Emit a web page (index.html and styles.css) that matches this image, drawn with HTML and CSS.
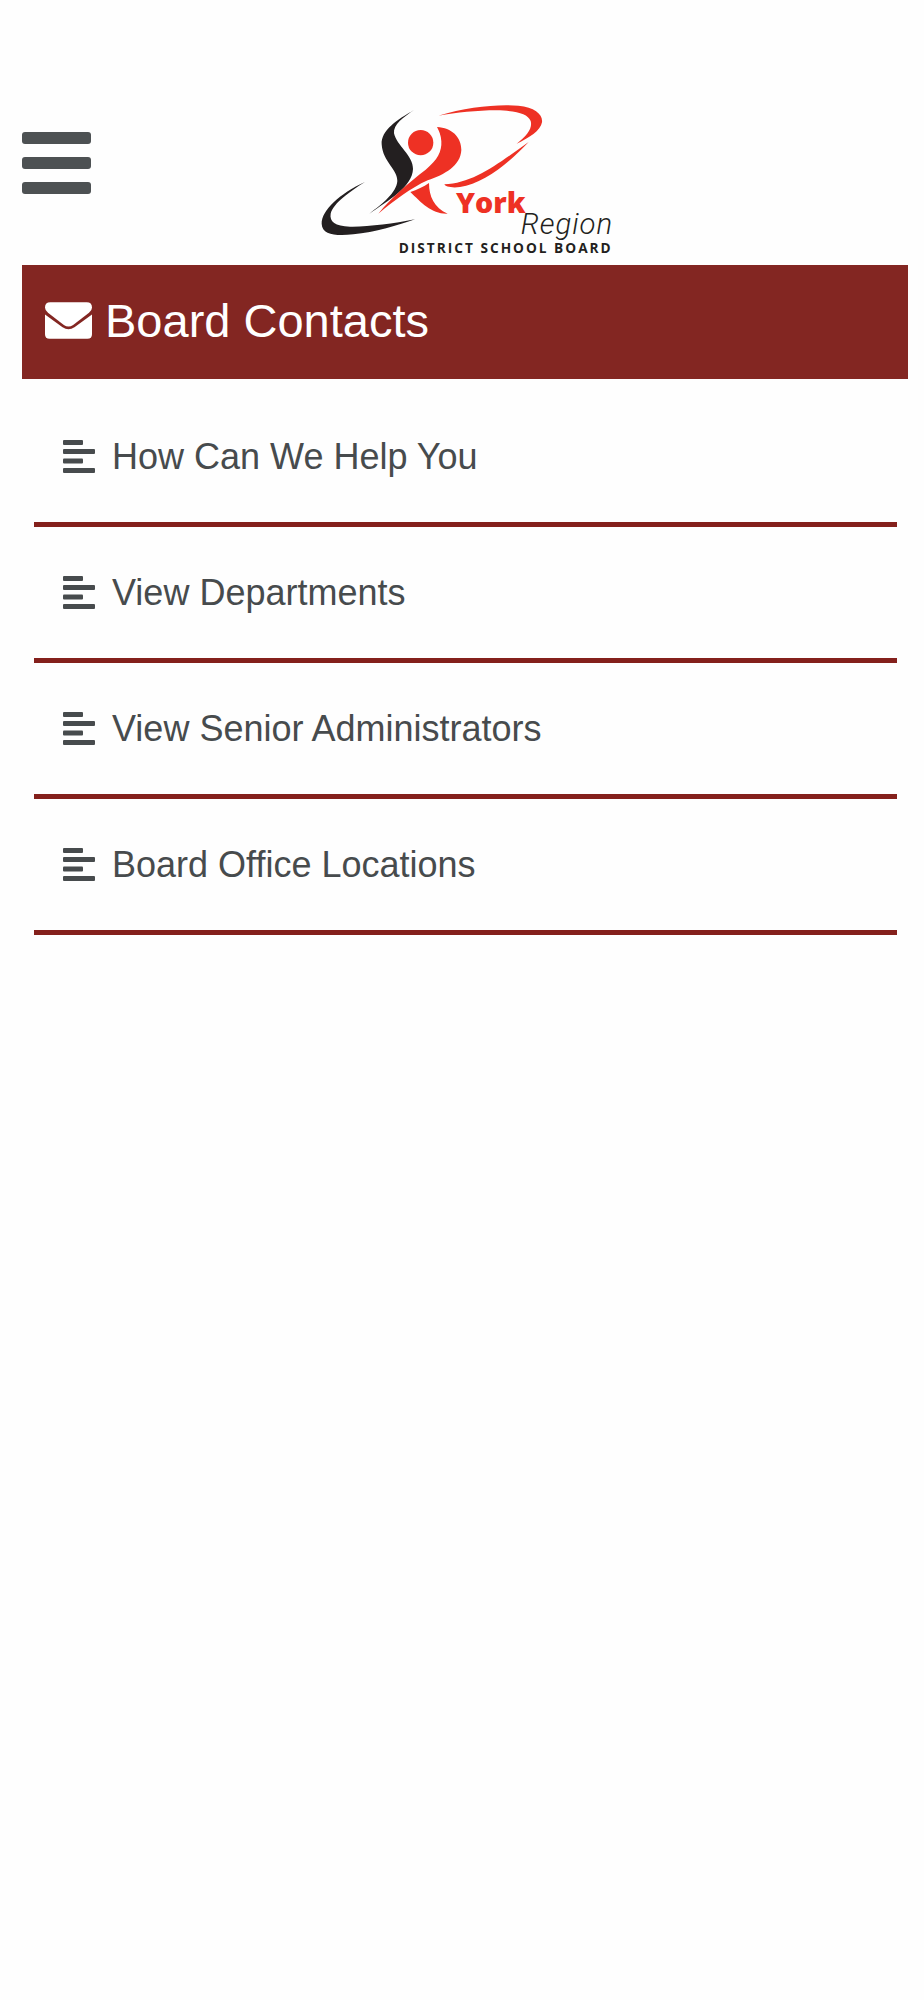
FILE: index.html
```html
<!DOCTYPE html>
<html lang="en">
<head>
<meta charset="utf-8">
<meta name="viewport" content="width=device-width, initial-scale=1">
<title>Board Contacts</title>
<link rel="stylesheet" href="styles.css">
</head>

<body>

<svg class="defs" aria-hidden="true">
	<symbol id="lines" viewBox="0 0 32 33">
		<rect x="0" y="0" width="20" height="5" rx="1"/>
		<rect x="0" y="9" width="32" height="5" rx="1"/>
		<rect x="0" y="18.500" width="20" height="5" rx="1"/>
		<rect x="0" y="28" width="32" height="5" rx="1"/>
	</symbol>
</svg>

<header class="header">
	<button class="menu" type="button" aria-label="Menu">
		<span></span>
		<span></span>
		<span></span>
	</button>
	<!-- logo -->
	<svg class="logo" viewBox="0 0 930 510" role="img" aria-label="York Region District School Board">
		<g class="black">
			<path d="M313 44C262 74 213 105 215 148C218 200 264 225 262 258C260 292 218 326 178 356C236 316 307 275 309 222C310 182 260 152 252 115C249 88 280 67 313 44Z"/>
			<path d="M165 261C88 296 35 346 35 386C36 420 80 424 130 418C195 413 265 390 315 373C248 386 175 396 120 395C75 393 58 380 62 356C70 325 120 289 165 261Z"/>
		</g>
		<g class="red">
			<circle cx="332" cy="143" r="38"/>
			<path d="M381 96C425 98 454 126 454 165C452 212 404 239 353 256C302 279 252 318 205 356C243 308 298 262 347 224C382 196 396 169 394 139C393 121 387 107 381 96Z"/>
			<path d="M301 291C321 285 341 275 357 264C357 304 372 338 413 356C366 358 334 323 301 291Z"/>
			<path d="M385 62C470 36 560 27 625 32C675 37 699 58 696 82C692 107 657 129 620 146C652 121 668 100 662 78C653 56 620 48 560 46C500 46 440 53 385 62Z"/>
			<path d="M656 141C598 203 520 267 450 276C425 280 405 274 403 268C492 265 568 203 656 141Z"/>
		</g>
		<text class="york" x="438" y="355">York</text>
		<text class="region" x="632" y="418">Region</text>
		<text class="board" x="266" y="475">DISTRICT SCHOOL BOARD</text>
	</svg>
</header>

<main>
	<h1 class="title">
		<svg class="mail" viewBox="0 0 142 111" aria-hidden="true">
			<path d="M16 0H126Q142 0 142 16Q142 25 133 32L85 69Q71 79 57 69L9 32Q0 25 0 16Q0 0 16 0Z"/>
			<path d="M0 37L53 76Q71 88 89 76L142 37V97Q142 111 128 111H14Q0 111 0 97Z"/>
		</svg>
		Board Contacts
	</h1>

	<ul class="list">
		<li><a href="#"><svg class="icon" aria-hidden="true"><use href="#lines"/></svg>How Can We Help You</a></li>
		<li><a href="#"><svg class="icon" aria-hidden="true"><use href="#lines"/></svg>View Departments</a></li>
		<li><a href="#"><svg class="icon" aria-hidden="true"><use href="#lines"/></svg>View Senior Administrators</a></li>
		<li><a href="#"><svg class="icon" aria-hidden="true"><use href="#lines"/></svg>Board Office Locations</a></li>
	</ul>
</main>

</body>
</html>
```
FILE: styles.css
```css
*{margin:0;padding:0;box-sizing:border-box;}
body{padding:95px 16px 0 22px;background:#fefefe;font-family:"Liberation Sans",Arial,sans-serif;color:#474b4d;}
ul{list-style:none;}
.defs{display:none;}

.header{display:grid;grid-template-columns:1fr auto 1fr;align-items:start;}
.menu{display:flex;flex-direction:column;gap:13px;width:69px;margin-top:37px;border:0;background:none;cursor:pointer;}
.menu span{height:12px;border-radius:3px;background:#4d5153;}

.logo{display:block;width:310px;height:170px;}
.black{fill:#231f20;}
.red,.york{fill:#ee3124;}
.york{font:800 86px "Open Sans",sans-serif;}
.region{font:italic 300 88px Roboto,sans-serif;letter-spacing:3px;fill:#231f20;}
.board{font:bold 41px "Open Sans",sans-serif;letter-spacing:6px;fill:#231f20;}

.title{display:flex;align-items:center;gap:13px;height:114px;padding:0 23px 3px;background:#832622;color:#fff;font-size:47px;font-weight:normal;}
.mail{width:47px;height:37px;fill:#fff;}

.list{margin:12px 11px 0 12px;}
.list li{border-bottom:5px solid #84201c;}
.list a{display:flex;align-items:center;gap:17px;height:131px;padding-left:29px;color:#474b4d;font-size:36px;text-decoration:none;}
.icon{width:32px;height:33px;fill:#474b4d;}
```
